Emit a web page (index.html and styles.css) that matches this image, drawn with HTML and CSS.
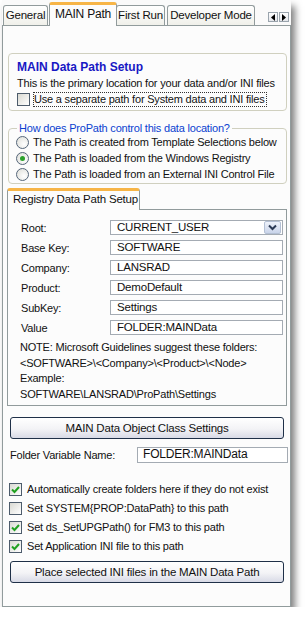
FILE: index.html
```html
<!DOCTYPE html>
<html lang="en">
<head>
  <meta charset="UTF-8" />
  <title>ProPath - MAIN Path</title>
  <link rel="stylesheet" href="styles.css">
</head>
<body>
  <div class="window">
    <div class="tabs">
      <div class="tab tab-general">General</div>
      <div class="tab tab-main active">MAIN Path</div>
      <div class="tab tab-first">First Run</div>
      <div class="tab tab-dev">Developer Mode</div>
      <div class="scroll">
        <span class="arrow"><svg width="8" height="7" viewBox="0 0 8 7"><path d="M6 0 L2 3.5 L6 7 Z" fill="#000"/></svg></span>
        <span class="arrow"><svg width="8" height="7" viewBox="0 0 8 7"><path d="M2 0 L6 3.5 L2 7 Z" fill="#000"/></svg></span>
      </div>
    </div>

    <div class="page">
      <div class="group">
        <div class="group-title">MAIN Data Path Setup</div>
        <div class="line">This is the primary location for your data and/or INI files</div>
        <label class="check"><span class="box"></span><span class="focus">Use a separate path for System data and INI files</span></label>
      </div>

      <fieldset class="options">
        <legend>How does ProPath control this data location?</legend>
        <label class="radio"><span class="dot"></span>The Path is created from Template Selections below</label>
        <label class="radio"><span class="dot on"></span>The Path is loaded from the Windows Registry</label>
        <label class="radio"><span class="dot"></span>The Path is loaded from an External INI Control File</label>
      </fieldset>

      <div class="subtabs">
        <div class="subtab">Registry Data Path Setup</div>
      </div>
      <div class="subpage">
        <div class="fields">
          <span>Root:</span>
          <div class="field combo">CURRENT_USER
            <span class="drop"><svg width="9" height="7" viewBox="0 0 9 7"><path d="M1 1.5 L4.5 5 L8 1.5" fill="none" stroke="#2b3a55" stroke-width="2"/></svg></span>
          </div>
          <span>Base Key:</span>
          <div class="field">SOFTWARE</div>
          <span>Company:</span>
          <div class="field">LANSRAD</div>
          <span>Product:</span>
          <div class="field">DemoDefault</div>
          <span>SubKey:</span>
          <div class="field">Settings</div>
          <span>Value</span>
          <div class="field">FOLDER:MAINData</div>
        </div>
        <p class="note">NOTE: Microsoft Guidelines suggest these folders:<br>&lt;SOFTWARE&gt;\&lt;Company&gt;\&lt;Product&gt;\&lt;Node&gt;<br>Example:<br>SOFTWARE\LANSRAD\ProPath\Settings</p>
      </div>

      <button type="button" class="btn">MAIN Data Object Class Settings</button>

      <div class="folder">
        <span>Folder Variable Name:</span>
        <div class="field">FOLDER:MAINData</div>
      </div>

      <div class="checks">
        <label class="check"><span class="box on"></span>Automatically create folders here if they do not exist</label>
        <label class="check"><span class="box"></span>Set SYSTEM{PROP:DataPath} to this path</label>
        <label class="check"><span class="box on"></span>Set ds_SetUPGPath() for FM3 to this path</label>
        <label class="check"><span class="box on"></span>Set Application INI file to this path</label>
      </div>

      <button type="button" class="btn btn-place">Place selected INI files in the MAIN Data Path</button>
    </div>
  </div>
</body>
</html>
```

FILE: styles.css
```css
body {
  margin: 0;
  background: #fff;
  font-family: "Liberation Sans", Arial, sans-serif;
  font-size: 11px;
  letter-spacing: -0.2px;
  color: #111;
}
.window {
  width: 289px;
  margin-left: 2px;
  background: #fafafa;
  box-shadow: 4px 6px 7px rgba(0, 0, 0, 0.5);
}

/* top tab strip */
.tabs {
  display: flex;
  align-items: flex-end;
  height: 25px;
  padding-left: 1px;
}
.tab {
  flex: none;
  height: 20px;
  line-height: 19px;
  margin-right: 2px;
  border: 1px solid #919b9c;
  border-bottom: none;
  border-radius: 3px 3px 0 0;
  background: linear-gradient(#ffffff, #f0f0ea);
  box-sizing: border-box;
  text-align: center;
  white-space: nowrap;
  font-size: 11.5px;
}
.tab-general { width: 45px; }
.tab-main { width: 68px; }
.tab-first { width: 49px; }
.tab-dev { width: 88px; }
.tab.active {
  position: relative;
  z-index: 1;
  height: 24px;
  margin: 0 0 -1px -1px;
  line-height: 18px;
  background: #fcfcfc;
  border-top: 3px solid #f7b547;
  font-size: 12px;
}
.tab.active + .tab {
  margin-left: -1px;
}
.scroll {
  display: flex;
  gap: 1px;
  align-self: flex-start;
  margin: 12px 2px 0 auto;
}
.arrow {
  display: flex;
  align-items: center;
  justify-content: center;
  width: 10px;
  height: 10px;
  border: 1px solid #9aa4ad;
  background: linear-gradient(#fefefe, #e4e6ea);
  box-sizing: border-box;
}

.page {
  border: 1px solid #919b9c;
  background: #fcfcfc;
  padding: 27px 3px 23px 5px;
}

/* first group */
.group {
  border: 1px solid #d0d0bf;
  border-radius: 4px;
  padding: 5px 0 3px 8px;
}
.group-title {
  font-weight: bold;
  font-size: 12px;
  letter-spacing: 0;
  line-height: 16px;
  color: #1818c4;
}
.line {
  line-height: 16px;
}
.check {
  display: flex;
  align-items: center;
  height: 16px;
  gap: 4px;
}
.focus {
  outline: 1px dotted #333;
  line-height: 13px;
  padding-right: 1px;
}
.box {
  width: 13px;
  height: 13px;
  box-sizing: border-box;
  border: 1px solid #4d5c6c;
  background: linear-gradient(135deg, #d9d9d2, #ffffff);
  flex-shrink: 0;
}
.box.on {
  background-image: url("data:image/svg+xml,%3Csvg xmlns='http://www.w3.org/2000/svg' width='11' height='11'%3E%3Cpath d='M2 5.5 L4.5 8 L9 3' fill='none' stroke='%2321a121' stroke-width='2'/%3E%3C/svg%3E"), linear-gradient(135deg, #d9d9d2, #ffffff);
}

/* radio group */
.options {
  margin: 11px 0 0;
  padding: 0 4px 1px 7px;
  border: 1px solid #d0d0bf;
  border-radius: 4px;
  min-inline-size: 0;
}
.options legend {
  padding: 0 2px;
  margin-left: 1px;
  line-height: 12px;
  color: #0b3fd0;
}
.radio {
  display: flex;
  align-items: center;
  gap: 4px;
  height: 16px;
}
.dot {
  width: 13px;
  height: 13px;
  box-sizing: border-box;
  border: 1px solid #55667a;
  border-radius: 50%;
  background: radial-gradient(circle at 65% 65%, #ffffff, #dcdcd6);
  display: flex;
  align-items: center;
  justify-content: center;
  flex-shrink: 0;
}
.dot.on::after {
  content: "";
  width: 5px;
  height: 5px;
  border-radius: 50%;
  background: #2ca12c;
}

/* registry sub tab */
.subtabs {
  display: flex;
  margin: 4px 0 -1px -1px;
}
.subtab {
  position: relative;
  z-index: 1;
  width: 133px;
  height: 22px;
  box-sizing: border-box;
  padding-left: 5px;
  line-height: 17px;
  font-size: 11.5px;
  white-space: nowrap;
  border: 1px solid #919b9c;
  border-top: 3px solid #f7b547;
  border-bottom: none;
  border-radius: 3px 3px 0 0;
  background: #fcfcfc;
}
.subpage {
  margin-left: -1px;
  border: 1px solid #919b9c;
  background: #fcfcfc;
  padding: 10px 3px 2px 13px;
}
.fields {
  display: grid;
  grid-template-columns: 89px 1fr;
  grid-auto-rows: 15px;
  row-gap: 5px;
  align-items: center;
}
.field {
  height: 15px;
  box-sizing: border-box;
  border: 1px solid #a4abb3;
  background: #fff;
  padding-left: 6px;
  line-height: 13px;
  font-size: 11.5px;
}
.combo {
  display: flex;
  justify-content: space-between;
  align-items: center;
  padding-right: 1px;
}
.drop {
  display: flex;
  align-items: center;
  justify-content: center;
  width: 15px;
  height: 11px;
  border: 1px solid #b4c0d4;
  border-radius: 2px;
  background: linear-gradient(#eef2fa, #c9d4ea);
}
.note {
  margin: 5px 0 0 -1px;
  line-height: 15.7px;
}

/* buttons */
.btn {
  display: block;
  width: 274px;
  height: 22px;
  margin: 11px 0 0 2px;
  border: 1px solid #1f3048;
  border-radius: 3px;
  background: linear-gradient(#ffffff, #f3f3f6 55%, #d8dae6);
  font-family: inherit;
  font-size: 11.5px;
  letter-spacing: -0.2px;
  color: #111;
  padding: 0;
}
.btn-place {
  margin-top: 5px;
}

.folder {
  display: grid;
  grid-template-columns: 127px 151px;
  align-items: center;
  margin: 8px -1px 0 2px;
}
.folder .field {
  height: 16px;
  padding-left: 5px;
  font-size: 12px;
}

.checks {
  margin: 17px 0 0 1px;
}
.checks .check {
  height: 19px;
  gap: 5px;
}
```
